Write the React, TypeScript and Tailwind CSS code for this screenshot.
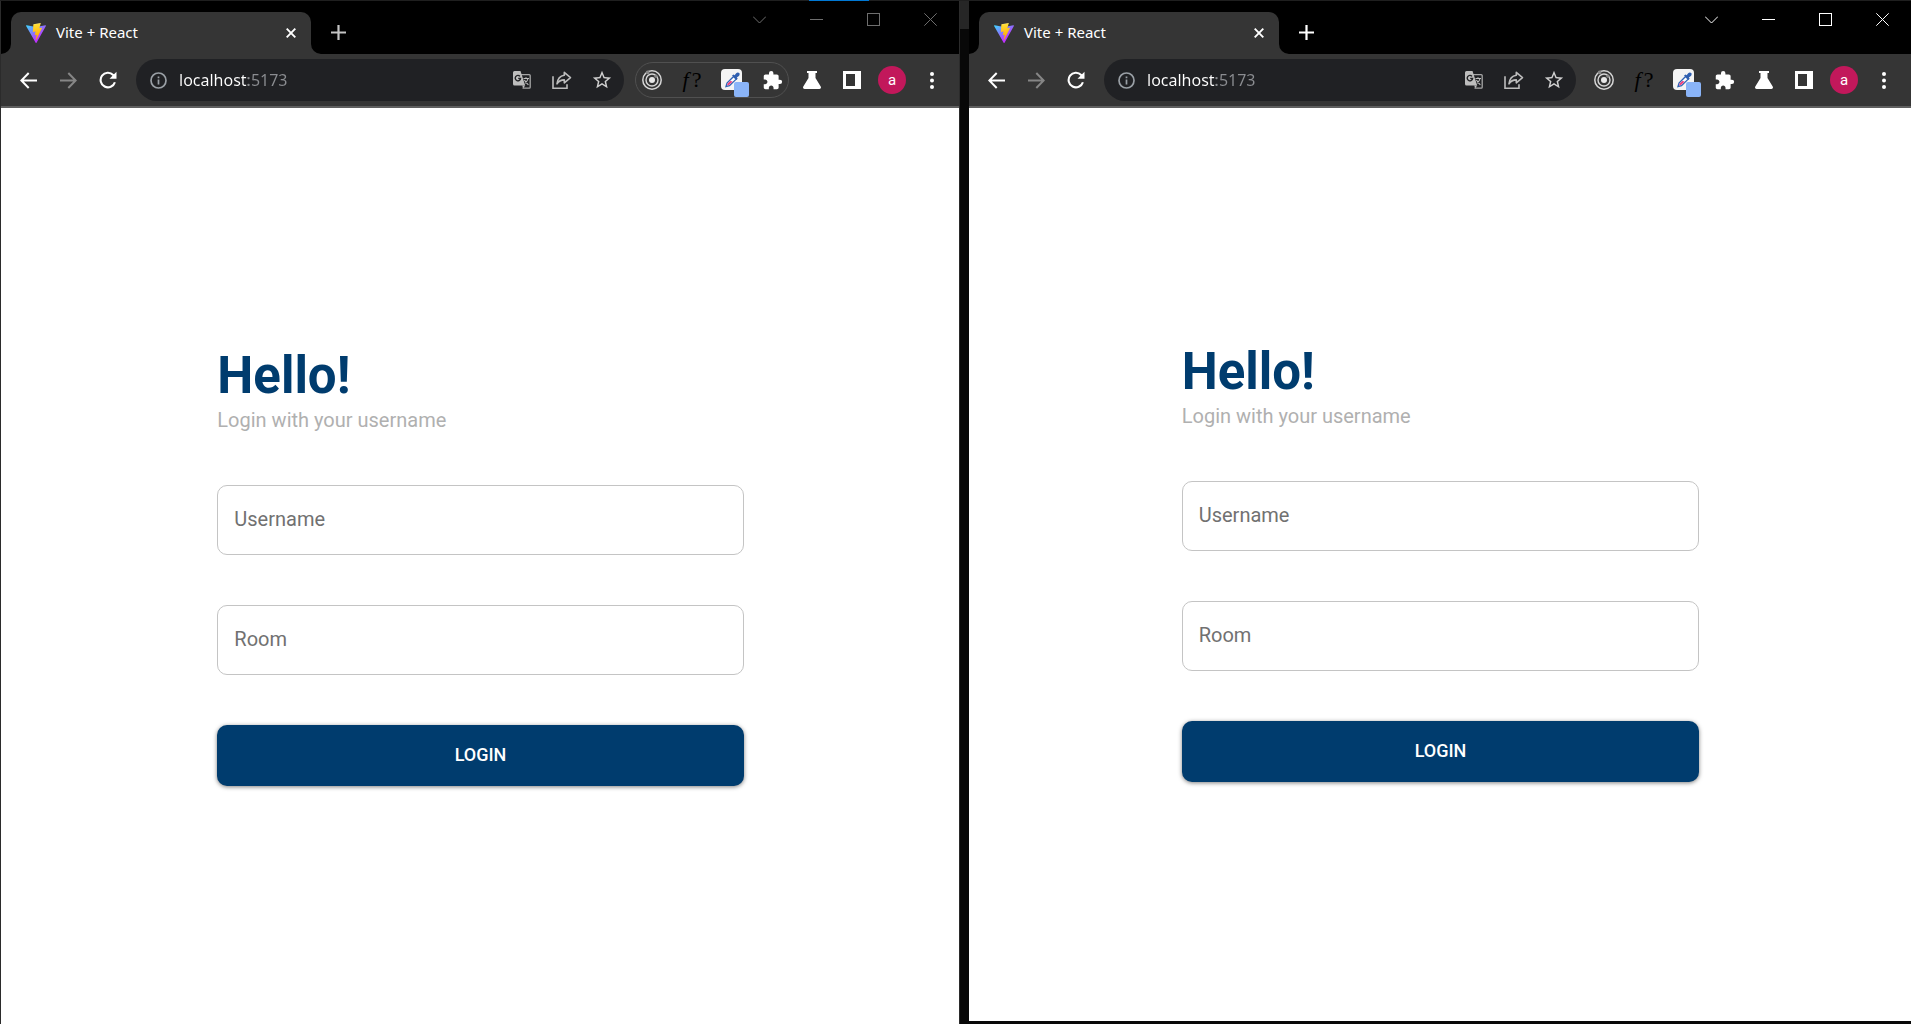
import { useId } from "react";
import type { ReactNode } from "react";
import { MdExtension, MdStarBorder } from "react-icons/md";

function ViteLogo() {
  const id = useId();
  return (
    <svg viewBox="0 0 256 257" className="h-5 w-5 shrink-0" aria-hidden="true">
      <defs>
        <linearGradient id={id + "a"} x1="-.828%" x2="57.636%" y1="7.652%" y2="78.411%">
          <stop offset="0%" stopColor="#41D1FF" />
          <stop offset="100%" stopColor="#BD34FE" />
        </linearGradient>
        <linearGradient id={id + "b"} x1="43.376%" x2="50.316%" y1="2.242%" y2="89.03%">
          <stop offset="0%" stopColor="#FFEA83" />
          <stop offset="8.333%" stopColor="#FFDD35" />
          <stop offset="100%" stopColor="#FFA800" />
        </linearGradient>
      </defs>
      <path
        fill={`url(#${id}a)`}
        d="M255.153 37.938L134.897 252.976c-2.483 4.44-8.862 4.466-11.382.048L.875 37.958c-2.746-4.814 1.371-10.646 6.827-9.67l120.385 21.517a6.537 6.537 0 0 0 2.322-.004l117.867-21.483c5.438-.991 9.574 4.796 6.877 9.62Z"
      />
      <path
        fill={`url(#${id}b)`}
        d="M185.432.063L96.44 17.501a3.268 3.268 0 0 0-2.634 3.014l-5.474 92.456a3.268 3.268 0 0 0 3.997 3.378l24.777-5.718c2.318-.535 4.413 1.507 3.936 3.838l-7.361 36.047c-.495 2.426 1.782 4.5 4.151 3.78l15.304-4.649c2.372-.72 4.652 1.36 4.15 3.788l-11.698 56.621c-.732 3.542 3.979 5.473 5.943 2.437l1.313-2.028l72.516-144.72c1.215-2.423-.88-5.186-3.54-4.672l-25.505 4.922c-2.396.462-4.435-1.77-3.759-4.114l16.646-57.705c.677-2.35-1.37-4.583-3.769-4.113Z"
      />
    </svg>
  );
}

function TranslateIcon() {
  return (
    <svg viewBox="0 0 18 18" className="h-[18px] w-[18px]" fill="none">
      <path d="M8 3.7h8.200a1 1 0 0 1 1 1v11.500a1 1 0 0 1-1 1H9.500" stroke="#a6a6a6" strokeWidth="1.3" />
      <path d="M1.500 0H7.500L12.200 14.500H1.500A1.500 1.500 0 0 1 0 13V1.500A1.500 1.500 0 0 1 1.500 0Z" fill="#bdbdbd" />
      <path d="M9.200 14.500h3l-2 2.800z" fill="#bdbdbd" />
      <path d="M7 5.400A2.700 2.700 0 1 0 7.600 7.400H5.200" stroke="#202124" strokeWidth="1.4" />
      <path d="M10.500 7.500h5.500M13 6.200v1.300M15 7.500c-.4 2-1.600 3.700-3 4.900M11.400 9c.8 1.600 2.200 3.200 4 4.800" stroke="#bdbdbd" strokeWidth="1.1" />
    </svg>
  );
}

function TargetIcon() {
  return (
    <svg viewBox="0 0 20 20" className="h-5 w-5" fill="none" stroke="#d6d6d6">
      <circle cx="10" cy="10" r="9.2" strokeWidth="1.5" />
      <circle cx="10" cy="10" r="6" strokeWidth="1.4" />
      <circle cx="10" cy="10" r="3" fill="#e8e8e8" stroke="none" />
      <circle cx="5.6" cy="2.4" r="1.9" fill="#8a8a8a" stroke="none" />
      <circle cx="14" cy="6.2" r="1.6" fill="#8a8a8a" stroke="none" />
    </svg>
  );
}

function PickerIcon() {
  return (
    <svg viewBox="0 0 30 30" className="h-[30px] w-[30px]">
      <rect x="0" y="0" width="21" height="21" rx="4" fill="#f4f4f4" />
      <path d="M5 17.5l1-3.4 6.6-6.6 2.6 2.6-6.7 6.6z" fill="#fff" stroke="#2f62b5" strokeWidth="1.3" />
      <path d="M6 16.6l.7-2 2.6-2.5 2.4.3-3.4 3.4z" fill="#f0407c" />
      <path d="M11 6.4l1.6-1 1 .9 1.6-2.1c.9-1 2.4-1 3-.2.7.7.6 2-.3 2.900l-2.100 1.700.9 1-1.200 1.500z" fill="#2f5fb0" />
      <rect x="13" y="13" width="15" height="15" rx="2" fill="#8ab4f8" />
    </svg>
  );
}

function ToolButton({ label, color = "text-white", children }: { label: string; color?: string; children: ReactNode }) {
  return (
    <button type="button" aria-label={label} className={`flex h-9 w-10 shrink-0 items-center justify-center ${color}`}>
      {children}
    </button>
  );
}

function CaptionButton({ label, children }: { label: string; children: ReactNode }) {
  return (
    <button type="button" aria-label={label} className="flex h-[37px] w-[57px] items-center justify-center">
      <svg viewBox="0 0 13 13" className="h-[13px] w-[13px]" fill="none" stroke="currentColor" strokeWidth="1">
        {children}
      </svg>
    </button>
  );
}

function TabFoot({ side }: { side: "left" | "right" }) {
  return (
    <svg
      viewBox="0 0 10 10"
      className={`absolute bottom-0 h-[10px] w-[10px] fill-[#353535] ${side === "left" ? "right-full" : "left-full"}`}
    >
      <path d={side === "left" ? "M10 0V10H0A10 10 0 0 0 10 0Z" : "M0 0V10H10A10 10 0 0 1 0 0Z"} />
    </svg>
  );
}

function TabStrip({ active }: { active: boolean }) {
  return (
    <header className="flex h-[53px] shrink-0 items-start bg-black">
      <div className="relative ml-[10px] mt-[11px] flex h-[42px] w-[300px] items-center rounded-t-[10px] bg-[#353535] pb-px pl-[15px] pr-2 text-white">
        <TabFoot side="left" />
        <TabFoot side="right" />
        <ViteLogo />
        <span className="ml-[10px] flex-1 pb-[2px] text-[15px] leading-5">Vite + React</span>
        <button type="button" aria-label="Close tab" className="flex h-6 w-6 items-center justify-center">
          <svg viewBox="0 0 10 10" className="h-[10px] w-[10px]" stroke="currentColor" strokeWidth="1.9">
            <path d="M.7.7l8.6 8.6M9.3.7L.7 9.3" />
          </svg>
        </button>
      </div>
      <button
        type="button"
        aria-label="New tab"
        className={`ml-[15px] mt-[16px] flex h-[31px] w-[25px] items-center justify-center ${active ? "text-white" : "text-[#c4c4c4]"}`}
      >
        <svg viewBox="0 0 15 15" className="h-[15px] w-[15px]" stroke="currentColor" strokeWidth="2.2">
          <path d="M7.5 0v15M0 7.5h15" />
        </svg>
      </button>
      <div className={`ml-auto flex ${active ? "text-white" : "text-[#6e6e6e]"}`}>
        <CaptionButton label="Search tabs">
          <path d="M0 3.5l6.5 6.5L13 3.5" />
        </CaptionButton>
        <CaptionButton label="Minimize">
          <path d="M0 6.5h13" />
        </CaptionButton>
        <CaptionButton label="Maximize">
          <rect x=".5" y=".5" width="12" height="12" />
        </CaptionButton>
        <CaptionButton label="Close window">
          <path d="M.3.3l12.4 12.4M12.7.3L.3 12.7" />
        </CaptionButton>
      </div>
    </header>
  );
}

function AddressBar() {
  return (
    <div className="mx-2 flex h-[42px] min-w-0 flex-1 items-center rounded-full bg-[#202124] pl-[14px] pr-[2px] text-[#c6c6c6]">
      <svg viewBox="0 0 17 17" className="h-[17px] w-[17px] shrink-0" fill="none" stroke="#9aa0a6" strokeWidth="1.7">
        <circle cx="8.5" cy="8.5" r="7.5" />
        <path d="M8.5 7.5v5M8.5 4.5v1.8" />
      </svg>
      <input
        aria-label="Address"
        defaultValue="localhost:5173"
        className="ml-3 min-w-0 flex-1 bg-[linear-gradient(90deg,#ffffff_69px,#8b8d91_69px)] bg-clip-text text-base leading-6 text-transparent outline-none"
      />
      <ToolButton label="Translate this page">
        <TranslateIcon />
      </ToolButton>
      <ToolButton label="Share this page" color="text-[#bdbdbd]">
        <svg viewBox="0 0 20 18" className="h-[18px] w-5" fill="none" stroke="currentColor" strokeWidth="1.6">
          <path d="M1 5.2v12h14v-4" />
          <path d="M12.3 1.4l6.2 5.2-6.2 5.2V8.9C8.8 8.9 6.6 10.2 5 12.8c.5-4.7 3-8 7.3-8.600z" strokeLinejoin="round" />
        </svg>
      </ToolButton>
      <ToolButton label="Bookmark this tab" color="text-[#d0d0d0]">
        <MdStarBorder className="h-[22px] w-[22px]" />
      </ToolButton>
    </div>
  );
}

function Toolbar({ active }: { active: boolean }) {
  return (
    <nav className="flex h-[54px] shrink-0 items-center border-b-2 border-[#5f5f5f] bg-[#353535] px-[7px]">
      <ToolButton label="Back">
        <svg viewBox="0 0 17 17" className="h-[17px] w-[17px]" fill="none" stroke="currentColor" strokeWidth="2">
          <path d="M17 8.5H1.5M8.700 1L1.300 8.500l7.400 7.500" />
        </svg>
      </ToolButton>
      <ToolButton label="Forward" color="text-[#868686]">
        <svg viewBox="0 0 17 17" className="h-[17px] w-[17px]" fill="none" stroke="currentColor" strokeWidth="2">
          <path d="M0 8.5h15.500M8.300 1l7.400 7.500L8.300 16" />
        </svg>
      </ToolButton>
      <ToolButton label="Reload">
        <svg viewBox="0 0 18 18" className="h-[18px] w-[18px]" fill="none" stroke="currentColor" strokeWidth="2.1">
          <path d="M15.9 11.2A7.300 7.300 0 1 1 14.200 4l1 1.100" />
          <path d="M17.500 .8v7h-7z" fill="currentColor" stroke="none" />
        </svg>
      </ToolButton>
      <AddressBar />
      <div className="relative flex">
        {!active && <span className="pointer-events-none absolute inset-x-[3px] inset-y-0 rounded-full border border-[#505050]" />}
        <ToolButton label="Target extension">
          <TargetIcon />
        </ToolButton>
        <ToolButton label="Font finder extension" color="text-black">
          <span className="font-['Liberation_Serif',serif] text-[22px] italic leading-6">
            f<span className="ml-[3px] not-italic">?</span>
          </span>
        </ToolButton>
        <ToolButton label="Color picker extension">
          <span className="-mb-2 -mr-2 block">
            <PickerIcon />
          </span>
        </ToolButton>
        <ToolButton label="Extensions">
          <MdExtension className="h-[21px] w-[21px]" />
        </ToolButton>
      </div>
      <ToolButton label="Experiments">
        <svg viewBox="0 0 18 18" className="h-[18px] w-[18px]" fill="currentColor">
          <path d="M4 0h10v2h-1.500v5l5.200 8.600c.7 1.200 0 2.400-1.300 2.400H1.600C.3 18-.4 16.800.3 15.600L5.500 7V2H4z" />
        </svg>
      </ToolButton>
      <ToolButton label="Side panel">
        <svg viewBox="0 0 18 18" className="h-[18px] w-[18px]" fill="currentColor">
          <path fillRule="evenodd" d="M0 0h18v18H0zM3 3v12h9V3z" />
        </svg>
      </ToolButton>
      <ToolButton label="Profile">
        <span className="flex h-7 w-7 items-center justify-center rounded-full bg-[#c2185b] pb-px font-[Roboto,sans-serif] text-[15px] leading-5">
          a
        </span>
      </ToolButton>
      <ToolButton label="Menu">
        <svg viewBox="0 0 4 17" className="h-[17px] w-1" fill="currentColor">
          <circle cx="2" cy="2" r="2" />
          <circle cx="2" cy="8.5" r="2" />
          <circle cx="2" cy="15" r="2" />
        </svg>
      </ToolButton>
    </nav>
  );
}

function Field({ label }: { label: string }) {
  return (
    <input
      type="text"
      aria-label={label}
      placeholder={label}
      className="mt-[50px] h-[70px] w-full rounded-[10px] border border-[#c4c4c4] bg-white px-4 pb-[2px] text-xl text-gray-800 outline-none placeholder:text-[#717171]"
    />
  );
}

function LoginForm() {
  return (
    <form className="flex w-[55%] flex-col font-[Roboto,sans-serif]" onSubmit={(e) => e.preventDefault()}>
      <h1 className="text-[51px] font-bold leading-[50px] text-[#003c6e]">Hello!</h1>
      <p className="mt-1 text-xl leading-[30px] text-[#b0b0b0]">Login with your username</p>
      <Field label="Username" />
      <Field label="Room" />
      <button
        type="submit"
        className="mt-[50px] h-[61px] rounded-[10px] bg-[#003c6e] pb-[2px] text-lg font-medium text-white shadow-[0_1px_4px_rgba(0,0,0,0.5)]"
      >
        LOGIN
      </button>
    </form>
  );
}

function BrowserWindow({ active, className }: { active: boolean; className: string }) {
  return (
    <section className={`flex min-w-0 flex-col font-['Noto_Sans',sans-serif] ${className}`}>
      <TabStrip active={active} />
      <Toolbar active={active} />
      <main className={`flex flex-1 items-center justify-center bg-white pl-px ${active ? "" : "pt-[5px]"}`}>
        <LoginForm />
      </main>
    </section>
  );
}

export default function App() {
  return (
    <div className="flex min-h-screen flex-col bg-[#080808]">
      <div className="flex h-px shrink-0 bg-[#1f1f1f]">
        <div className="ml-[42.333%] w-[60px] bg-[#0078d4]" />
      </div>
      <div className="flex flex-1">
        <BrowserWindow active={false} className="basis-[959px] shrink grow border-l border-[#2b2b2b]" />
        <div className="w-[10px] shrink-0 border-l border-[#2b2b2b]">
          <div className="h-7 bg-[#262626]" />
        </div>
        <BrowserWindow active className="basis-[942px] shrink grow border-b-[3px] border-[#080808]" />
      </div>
    </div>
  );
}
